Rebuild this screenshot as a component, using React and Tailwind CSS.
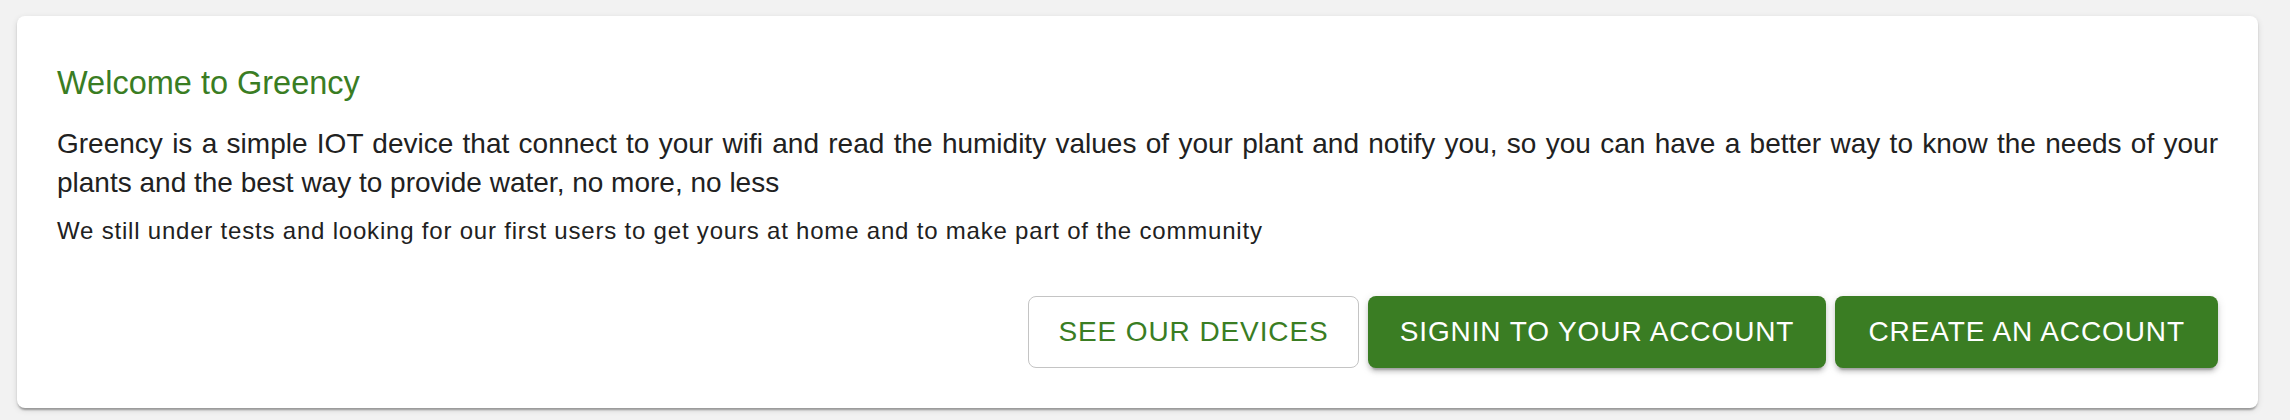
export default function App() {
  return (
    <div className="min-h-[420px] bg-[#f2f2f2] pt-4 pl-[17px] pr-[32px] font-['Liberation_Sans',Arial,sans-serif]">
      <div className="rounded-[8px] bg-white p-10 shadow-[0_4px_2px_-2px_rgba(0,0,0,0.2),0_2px_2px_0_rgba(0,0,0,0.14),0_2px_6px_0_rgba(0,0,0,0.12)]">
        <h1 className="mb-[15px] text-[32.5px] leading-[54px] font-normal text-[#3a7d23]">Welcome to Greency</h1>
        <p className="text-justify text-[28px] leading-[38.5px] text-[#212121]">
          Greency is a simple IOT device that connect to your wifi and read the humidity values of your plant and notify
          you, so you can have a better way to know the needs of your plants and the best way to provide water, no more,
          no less
        </p>
        <p className="mt-[12px] text-justify text-[24px] leading-[33px] tracking-[0.8px] text-[#212121]">
          We still under tests and looking for our first users to get yours at home and to make part of the community
        </p>
        <div className="mt-[49px] flex justify-end gap-[9px]">
          <button className="h-[72px] rounded-[8px] border-[1.5px] border-[#c4c4c4] bg-white px-[29px] text-[28px] tracking-[0.9px] text-[#3a7d23] uppercase">
            See our devices
          </button>
          <button className="h-[72px] rounded-[8px] bg-[#3a7d23] px-[32px] text-[28px] tracking-[0.9px] text-white uppercase shadow-[0_6px_2px_-4px_rgba(0,0,0,0.2),0_4px_4px_0_rgba(0,0,0,0.14),0_2px_10px_0_rgba(0,0,0,0.12)]">
            Signin to your account
          </button>
          <button className="h-[72px] rounded-[8px] bg-[#3a7d23] px-[33px] text-[28px] tracking-[0.9px] text-white uppercase shadow-[0_6px_2px_-4px_rgba(0,0,0,0.2),0_4px_4px_0_rgba(0,0,0,0.14),0_2px_10px_0_rgba(0,0,0,0.12)]">
            Create an account
          </button>
        </div>
      </div>
    </div>
  )
}
